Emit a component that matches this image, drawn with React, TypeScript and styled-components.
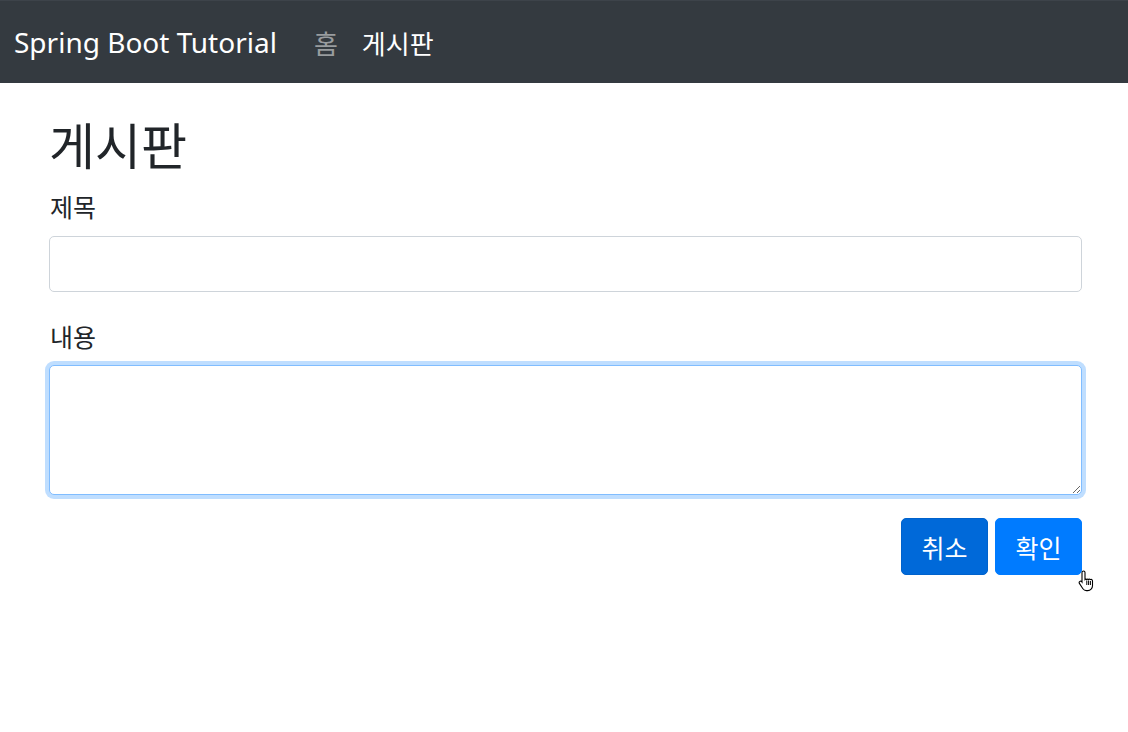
import React from "react";
import styled, { createGlobalStyle } from "styled-components";

const GlobalStyle = createGlobalStyle`
  html, body {
    margin: 0;
    padding: 0;
    background: #ffffff;
  }
  body {
    font-family: "Noto Sans", "Noto Sans CJK KR", sans-serif;
    color: #212529;
  }
  * {
    box-sizing: border-box;
  }
`;

const Navbar = styled.nav`
  height: 83px;
  background: #343a40;
  display: flex;
  align-items: center;
  padding: 0 14px;
  border-top: 1px solid #3d434a;
`;

const Brand = styled.a`
  font-family: "Noto Sans", "Noto Sans CJK KR", sans-serif;
  font-size: 28px;
  color: #ffffff;
  text-decoration: none;
  margin-right: 37px;
  white-space: nowrap;
`;

const NavList = styled.div`
  display: flex;
  align-items: center;
  gap: 24px;
`;

const NavLink = styled.a<{ $active?: boolean }>`
  font-family: "Noto Sans CJK KR", sans-serif;
  font-size: 26px;
  color: ${(p) => (p.$active ? "#ffffff" : "rgba(255, 255, 255, 0.5)")};
  text-decoration: none;
`;

const Container = styled.main`
  padding: 0 46px 60px 49px;
`;

const Title = styled.h1`
  font-family: "Noto Sans CJK KR", sans-serif;
  font-weight: 400;
  font-size: 50px;
  line-height: 1.2;
  margin: 30px 0 15px 0;
`;

const FormGroup = styled.div`
  margin-bottom: 26px;
`;

const Label = styled.label`
  display: block;
  font-family: "Noto Sans CJK KR", sans-serif;
  font-size: 25px;
  line-height: 1.5;
  margin-bottom: 10px;
  padding-left: 1px;
`;

const Input = styled.input`
  display: block;
  width: 100%;
  height: 56px;
  border: 1px solid #ced4da;
  border-radius: 5px;
  padding: 8px 15px;
  font-size: 20px;
  outline: none;
  background: #ffffff;
`;

const TextArea = styled.textarea`
  display: block;
  width: 100%;
  height: 130px;
  border: 1px solid #80bdff;
  border-radius: 5px;
  padding: 8px 15px;
  font-size: 20px;
  outline: none;
  box-shadow: 0 0 0 4px rgba(0, 123, 255, 0.25);
  resize: vertical;
`;

const Actions = styled.div`
  display: flex;
  justify-content: flex-end;
  gap: 7px;
  margin-top: -3px;
  position: relative;
`;

const Button = styled.button<{ $pressed?: boolean }>`
  width: 87px;
  height: 57px;
  border-radius: 5px;
  border: 1px solid ${(p) => (p.$pressed ? "#0062cc" : "#007bff")};
  background: ${(p) => (p.$pressed ? "#0069d9" : "#007bff")};
  color: #ffffff;
  font-family: "Noto Sans CJK KR", sans-serif;
  font-size: 25px;
  padding: 0;
  cursor: pointer;
`;

const Cursor = styled.svg`
  position: absolute;
  right: -13px;
  top: 52px;
  pointer-events: none;
  overflow: visible;
`;

export default function App() {
  return (
    <>
      <GlobalStyle />
      <Navbar>
        <Brand href="#">Spring Boot Tutorial</Brand>
        <NavList>
          <NavLink href="#">홈</NavLink>
          <NavLink href="#" $active>
            게시판
          </NavLink>
        </NavList>
      </Navbar>
      <Container>
        <Title>게시판</Title>
        <form>
          <FormGroup>
            <Label htmlFor="title">제목</Label>
            <Input id="title" type="text" />
          </FormGroup>
          <FormGroup>
            <Label htmlFor="content">내용</Label>
            <TextArea id="content" />
          </FormGroup>
          <Actions>
            <Button type="button" $pressed>
              취소
            </Button>
            <Button type="submit">확인</Button>
            <Cursor width="17" height="22" viewBox="0 0 17 22">
              <path
                d="M5.5 1c.8 0 1.5.6 1.5 1.4V9.5c.5-.5 1.3-.5 1.8 0 .5-.5 1.3-.5 1.8 0 .5-.4 1.3-.4 1.8.1.5-.3 1.3-.2 1.7.3.3.3.4.7.4 1.1v4.8c0 2.6-2.1 4.8-4.7 4.8H8.4c-1.4 0-2.7-.7-3.5-1.9L1.4 13.4c-.5-.7-.3-1.6.4-2 .6-.4 1.4-.3 1.9.3l.3.4V2.4C4 1.6 4.7 1 5.5 1z"
                fill="#ffffff"
                stroke="#000000"
                strokeWidth="1.1"
              />
              <path d="M8.8 10.5v4.5M10.6 10.5v4.5M12.4 11v4" stroke="#000000" strokeWidth="1" />
            </Cursor>
          </Actions>
        </form>
      </Container>
    </>
  );
}
